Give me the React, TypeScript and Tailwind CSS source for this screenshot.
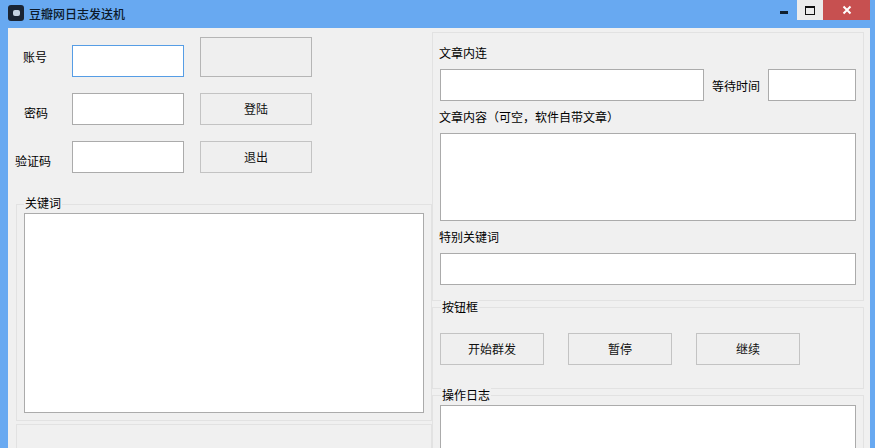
import React from "react";

const fieldCls = "bg-white border border-[#ababab] shrink-0";
const btnCls =
  "bg-[#efefef] border border-[#c3c3c3] shrink-0 text-[12px] text-[#111] flex items-center justify-center";

const Legend: React.FC<{ text: string; className: string }> = ({ text, className }) => (
  <span className={`absolute bg-[#f0f0f0] text-[12px] leading-[16px] text-[#000] ${className}`}>{text}</span>
);

const App: React.FC = () => {
  return (
    <div
      className="w-[875px] h-[448px] overflow-hidden bg-[#68a9f1] flex flex-col"
      style={{ fontFamily: '"Noto Sans CJK SC", "Liberation Sans", sans-serif' }}
    >
      {/* Title bar */}
      <div className="h-[28px] shrink-0 flex items-start pl-[8px] pr-[5px]">
        <div className="mt-[5px] w-[16px] h-[16px] rounded-[3px] bg-[#1a2433] flex items-center justify-center">
          <div className="w-[7px] h-[6px] rounded-[2px] bg-[#c5d2e2]" />
        </div>
        <span className="ml-[5px] mt-[5px] text-[12px] leading-[17px] font-medium text-[#0c1a2a]">豆瓣网日志发送机</span>
        <div className="ml-auto flex items-start">
          <div className="w-[27px] h-[20px] flex items-center justify-center">
            <div className="w-[8px] h-[3px] bg-[#10202f] mt-[4px]" />
          </div>
          <div className="w-[26px] h-[20px] bg-[#ececec] flex items-center justify-center">
            <div className="w-[10px] h-[9px] border border-[#111] border-t-2" />
          </div>
          <div className="w-[47px] h-[20px] bg-[#c75050] flex items-center justify-center">
            <svg width="10" height="10" viewBox="0 0 10 10">
              <path d="M1.5 1.5 L8.5 8.5 M8.5 1.5 L1.5 8.5" stroke="#fff" strokeWidth="2" />
            </svg>
          </div>
        </div>
      </div>

      {/* Client area */}
      <div className="ml-[8px] mr-[5px] flex-1 bg-[#f0f0f0] flex pl-[8px] pr-[6px] pt-[4px] overflow-hidden">
        {/* Left column */}
        <div className="w-[416px] shrink-0 flex flex-col">
          <div className="h-[170px] shrink-0 flex flex-col pt-[5px]">
            <div className="h-[40px] flex items-end">
              <span className="w-[56px] h-[32px] pl-[7px] text-[12px] leading-[24px] text-[#000]">账号</span>
              <div className={`${fieldCls} w-[112px] h-[32px] !border-[#569de5]`} />
              <div className={`${btnCls} w-[112px] h-[40px] ml-[16px] !border-[#b5b5b5]`} />
            </div>
            <div className="h-[32px] mt-[16px] flex">
              <span className="w-[56px] pl-[8px] text-[12px] leading-[40px] text-[#000]">密码</span>
              <div className={`${fieldCls} w-[112px] h-[32px]`} />
              <div className={`${btnCls} w-[112px] h-[32px] ml-[16px]`}>登陆</div>
            </div>
            <div className="h-[32px] mt-[16px] flex">
              <span className="w-[56px] -ml-[1px] text-[12px] leading-[40px] text-[#000]">验证码</span>
              <div className={`${fieldCls} w-[112px] h-[32px] ml-[1px]`} />
              <div className={`${btnCls} w-[112px] h-[32px] ml-[16px]`}>退出</div>
            </div>
          </div>
          {/* 关键词 group */}
          <div className="relative h-[217px] mt-[2px] shrink-0 border border-[#e2e2e2] px-[7px] pt-[8px]">
            <Legend text="关键词" className="left-[7px] -top-[10px] px-[1px]" />
            <div className={`${fieldCls} w-[400px] h-[200px]`} />
          </div>
          <div className="flex-1 mt-[3px] border border-b-0 border-[#e2e2e2]" />
        </div>

        {/* Right column */}
        <div className="w-[432px] shrink-0 flex flex-col">
          <div className="h-[269px] shrink-0 border border-[#e2e2e2] pl-[6px] flex flex-col">
            <div className="h-[36px] flex items-center text-[12px] text-[#000] pt-[4px] pb-[1px]">文章内连</div>
            <div className="flex items-center ml-[1px]">
              <div className={`${fieldCls} w-[264px] h-[32px]`} />
              <span className="w-[64px] text-center text-[12px] text-[#000] pt-[1px]">等待时间</span>
              <div className={`${fieldCls} w-[88px] h-[32px]`} />
            </div>
            <div className="h-[32px] flex items-center text-[12px] text-[#000]">文章内容（可空，软件自带文章）</div>
            <div className={`${fieldCls} w-[416px] h-[88px] ml-[1px]`} />
            <div className="h-[32px] flex items-center text-[12px] text-[#000]">特别关键词</div>
            <div className={`${fieldCls} w-[416px] h-[32px] ml-[1px]`} />
          </div>
          {/* 按钮框 group */}
          <div className="relative h-[82px] mt-[6px] shrink-0 border border-[#e2e2e2] pl-[7px] pt-[25px] flex gap-[24px]">
            <Legend text="按钮框" className="left-[8px] -top-[9px] px-[1px]" />
            <div className={`${btnCls} w-[104px] h-[32px]`}>开始群发</div>
            <div className={`${btnCls} w-[104px] h-[32px]`}>暂停</div>
            <div className={`${btnCls} w-[104px] h-[32px]`}>继续</div>
          </div>
          {/* 操作日志 group */}
          <div className="relative flex-1 mt-[6px] border border-[#e2e2e2] pl-[7px] pt-[9px]">
            <Legend text="操作日志" className="left-[8px] -top-[9px] px-[1px]" />
            <div className={`${fieldCls} w-[416px] h-[60px]`} />
          </div>
        </div>
      </div>
    </div>
  );
};

export default App;
